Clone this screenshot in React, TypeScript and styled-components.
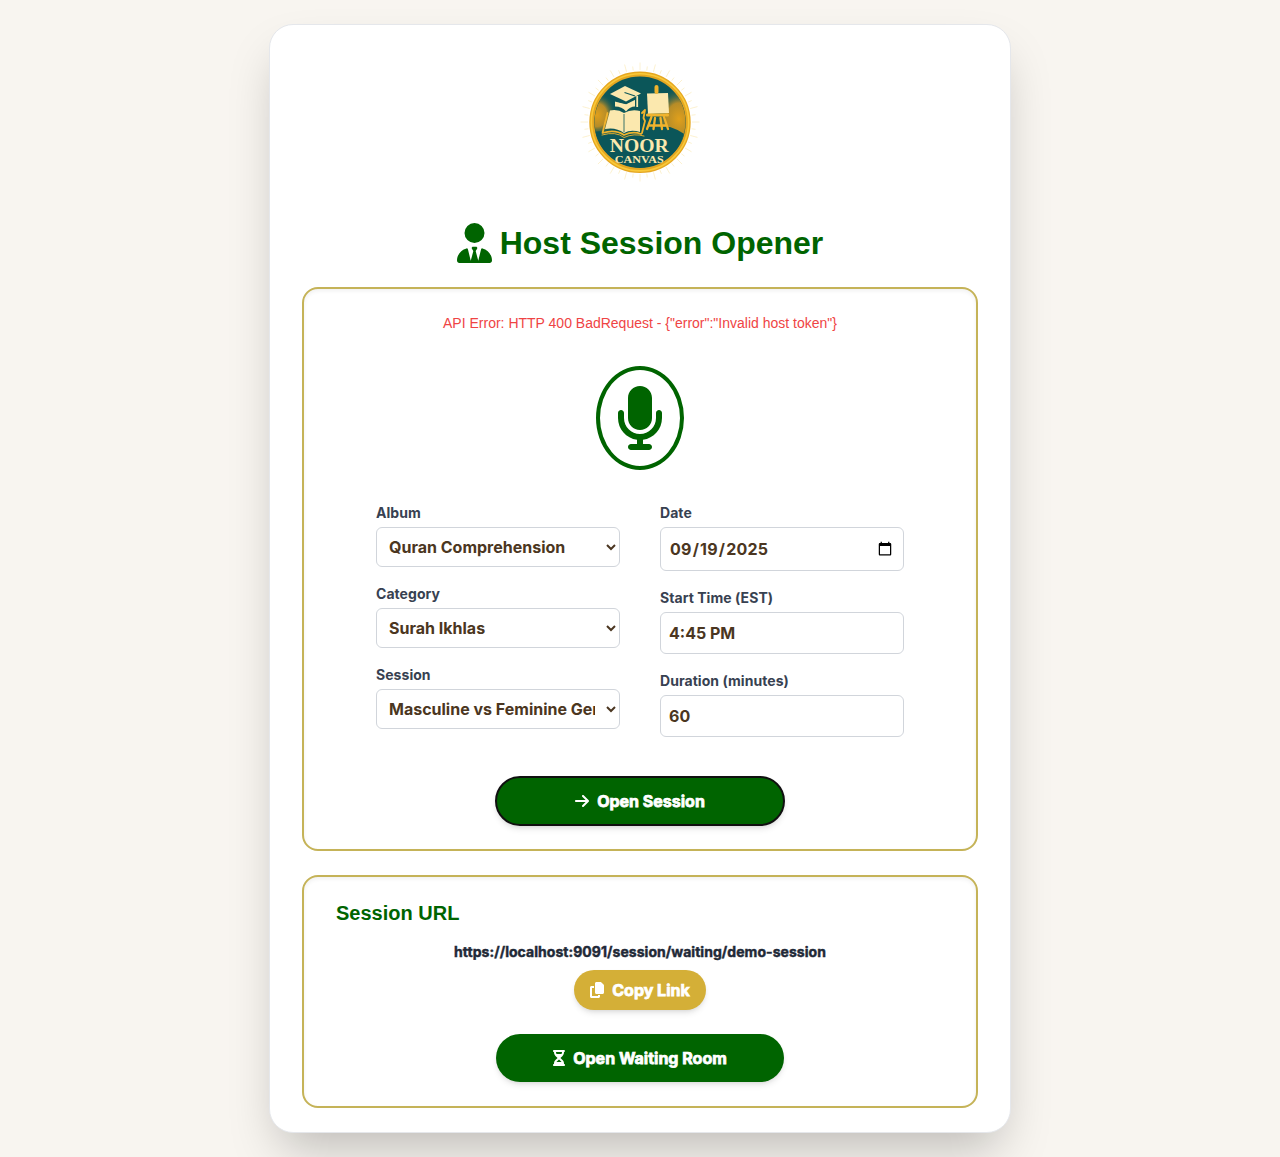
import React from "react";
import styled, { createGlobalStyle, css } from "styled-components";
import { FaUserTie, FaMicrophone, FaArrowRight, FaCopy, FaHourglassHalf } from "react-icons/fa6";

const GlobalStyle = createGlobalStyle`
  *, *::before, *::after { box-sizing: border-box; }
  body {
    margin: 0;
    background: #f8f5f0;
    color: #1f2937;
    font-family: Inter, "Liberation Sans", sans-serif;
    font-size: 16px;
    line-height: 24px;
  }
`;

const Page = styled.main`
  min-height: 1157px;
  padding: 24px;
  display: flex;
  justify-content: center;
  align-items: flex-start;
`;

const Shell = styled.div`
  width: 742px;
  height: 1109px;
  padding: 32px 32px 24px;
  background: #fff;
  border: 1px solid #e5e7eb;
  border-radius: 24px;
  box-shadow: 0 25px 50px -12px rgba(0, 0, 0, 0.25);
  display: flex;
  flex-direction: column;
`;

const LogoRow = styled.div`
  height: 130px;
  display: flex;
  justify-content: center;
  align-items: center;
`;

const Title = styled.h1`
  margin: 36px 0 24px;
  height: 40px;
  display: flex;
  justify-content: center;
  align-items: center;
  gap: 8px;
  color: #006400;
  font: 700 32px/40px "Liberation Sans", Arial, sans-serif;
`;

const Panel = styled.section<{ $height: number }>`
  height: ${(p) => p.$height}px;
  border: 2px solid #c5b358;
  border-radius: 16px;
  box-shadow: inset 0 2px 4px rgba(0, 0, 0, 0.06);
  padding: 24px 32px;
  display: flex;
  flex-direction: column;
  align-items: center;
  & + & { margin-top: 24px; }
  & > * { flex-shrink: 0; }
`;

const ErrorText = styled.p`
  margin: 0;
  color: #ef4444;
  font: 400 14px/20px "Liberation Sans", Arial, sans-serif;
`;

const MicBadge = styled.div`
  margin: 33px 0 32px;
  padding: 16px;
  display: flex;
  color: #006400;
  border: 4px solid #006400;
  border-radius: 50%;
`;

const Form = styled.div`
  width: 528px;
  display: grid;
  grid-template-columns: 1fr 1fr;
  gap: 40px;
`;

const Column = styled.div`
  display: flex;
  flex-direction: column;
  gap: 16px;
`;

const Field = styled.label`
  display: flex;
  flex-direction: column;
  gap: 4px;
  color: #374151;
  font-size: 14px;
  font-weight: 700;
  line-height: 21px;
  letter-spacing: 0.05px;
`;

const control = css`
  width: 100%;
  margin: 0;
  padding: 8px;
  color: #4b3621;
  background: #fff;
  border: 1px solid #d1d5db;
  border-radius: 6px;
  font: 700 16px/24px Inter, sans-serif;
  letter-spacing: normal;
  outline: none;
`;

const Select = styled.select`
  ${control}
  height: 40px;
`;

const Input = styled.input`
  ${control}
  height: 42px;
`;

const DateInput = styled(Input)`
  height: 44px;
  letter-spacing: 0.22px;
`;

const Pill = styled.button<{ $width: number; $height: number; $tone: string; $outlined?: boolean }>`
  width: ${(p) => p.$width}px;
  height: ${(p) => p.$height}px;
  padding: 0;
  display: flex;
  justify-content: center;
  align-items: center;
  gap: 8px;
  color: #fff;
  background: ${(p) => p.$tone};
  border: ${(p) => (p.$outlined ? "2px solid #101010" : "0")};
  border-radius: 999px;
  box-shadow: 0 4px 6px -1px rgba(0, 0, 0, 0.1), 0 2px 4px -2px rgba(0, 0, 0, 0.1);
  font: 700 16px/24px Inter, sans-serif;
  -webkit-text-stroke: 0.75px currentColor;
`;

const OpenSession = styled(Pill)`
  margin-top: 39px;
`;

const WaitingRoom = styled(Pill)`
  margin-top: 24px;
`;

const Heading = styled.h2`
  align-self: flex-start;
  margin: -2px 0 0;
  color: #006400;
  font: 700 20px/28px "Liberation Sans", Arial, sans-serif;
`;

const Url = styled.p`
  margin: 15px 0 8px;
  font-size: 14px;
  font-weight: 700;
  line-height: 20px;
  letter-spacing: 0.045px;
  -webkit-text-stroke: 0.45px currentColor;
`;

function Logo() {
  const rays = Array.from({ length: 48 }, (_, i) => i * 7.5);
  return (
    <svg width="120" height="120" viewBox="0 0 120 120" role="img" aria-label="Noor Canvas">
      <defs>
        <radialGradient id="glow" cx="0.5" cy="0.5" r="0.5">
          <stop offset="0" stopColor="#e0a01c" />
          <stop offset="0.5" stopColor="#c99222" stopOpacity="0.9" />
          <stop offset="1" stopColor="#0b5659" stopOpacity="0" />
        </radialGradient>
        <clipPath id="disc"><circle cx="60" cy="60" r="45.5" /></clipPath>
      </defs>
      {rays.map((a, i) => (
        <line key={a} x1="60" y1="8" x2="60" y2={i % 2 ? 4 : 0.5} stroke="#fbefc9" strokeWidth="0.8" transform={`rotate(${a} 60 60)`} />
      ))}
      <circle cx="60" cy="60.3" r="48.2" fill="#0b5659" stroke="#e5a721" strokeWidth="5" />
      <circle cx="60" cy="60.3" r="48.6" fill="none" stroke="#f9c93a" strokeWidth="1.6" />
      <g clipPath="url(#disc)">
        <ellipse cx="17" cy="53" rx="20" ry="23" fill="url(#glow)" />
        <ellipse cx="99" cy="57" rx="25" ry="32" fill="url(#glow)" />
        <path d="M10 72Q20 67 24 71Q36 67 44 74Q54 70 64 73Q76 63 90 65Q100 68 110 76V110H10Z" fill="#0b5659" />
      </g>
      <g fill="#fbe8ae">
        <path d="M30 32 45 24 61 31.5 46 39.5Z" />
        <path d="M35 39V44.5Q42 44.5 46 49.5Q50 44.5 55 44.5V37L46 42Z" />
        <path d="M30 48.5Q38 47 44 51Q51 47 60 49V70Q51 67 44 71Q36 65 25 67Z" />
        <path d="M67 31.5 88 31 89 51 68 52Z" />
      </g>
      <path d="M44.5 30.5 55 34" fill="none" stroke="#0b5659" strokeWidth="1.2" />
      <path d="M34 38.5 46 41.5 55 37" fill="none" stroke="#0b5659" strokeWidth="1.4" />
      <path d="M44 52V70" fill="none" stroke="#0b5659" strokeWidth="0.8" />
      <path d="M57.2 34V45" stroke="#fbe8ae" strokeWidth="1.8" />
      <g fill="none" stroke="#f0b32d" strokeWidth="1.8" strokeLinecap="round" strokeLinejoin="round">
        <path d="M27.5 51 22.5 71Q35 67 44 73Q53 69 61 72M62 51 65 48 63.5 56 65 59 62 71" />
        <path d="M22 73Q36 69 44 75.5Q54 71 64 74" strokeWidth="0.9" />
        <path d="M76.5 25V30" strokeWidth="4" />
        <path d="M67.5 53H87.5" strokeWidth="3.2" />
        <path d="M71.5 55 67 67M84 55 88 67M75 56 73.5 67M80.5 56 82 67M70 63.5H86" strokeWidth="2.3" />
      </g>
      <text x="59.2" y="89.5" fill="#fbe8ae" textAnchor="middle" fontFamily="Liberation Serif, serif" fontSize="18" fontWeight="700" textLength="59" lengthAdjust="spacingAndGlyphs">NOOR</text>
      <text x="59.2" y="100.8" fill="#fbe8ae" textAnchor="middle" fontFamily="Liberation Serif, serif" fontSize="10.5" fontWeight="700" textLength="49" lengthAdjust="spacingAndGlyphs">CANVAS</text>
    </svg>
  );
}

const albumFields = [
  { label: "Album", value: "Quran Comprehension" },
  { label: "Category", value: "Surah Ikhlas" },
  { label: "Session", value: "Masculine vs Feminine Gender" },
];

export default function App() {
  return (
    <>
      <GlobalStyle />
      <Page>
        <Shell>
          <LogoRow><Logo /></LogoRow>
          <Title><FaUserTie size={40} style={{ width: 35 }} />Host Session Opener</Title>
          <Panel $height={564}>
            <ErrorText>{'API Error: HTTP 400 BadRequest - {"error":"Invalid host token"}'}</ErrorText>
            <MicBadge><FaMicrophone size={64} style={{ width: 48 }} /></MicBadge>
            <Form>
              <Column>
                {albumFields.map((f) => (
                  <Field key={f.label}>
                    {f.label}
                    <Select defaultValue={f.value}><option>{f.value}</option></Select>
                  </Field>
                ))}
              </Column>
              <Column>
                <Field>Date<DateInput type="date" defaultValue="2025-09-19" /></Field>
                <Field>Start Time (EST)<Input type="text" defaultValue="4:45 PM" /></Field>
                <Field>Duration (minutes)<Input type="number" defaultValue="60" /></Field>
              </Column>
            </Form>
            <OpenSession $width={290} $height={50} $tone="#006400" $outlined>
              <FaArrowRight size={16} style={{ width: 14 }} />Open Session
            </OpenSession>
          </Panel>
          <Panel $height={233}>
            <Heading>Session URL</Heading>
            <Url>https://localhost:9091/session/waiting/demo-session</Url>
            <Pill $width={132} $height={40} $tone="#d4af37">
              <FaCopy size={16} style={{ width: 14 }} />Copy Link
            </Pill>
            <WaitingRoom $width={288} $height={48} $tone="#006400">
              <FaHourglassHalf size={16} style={{ width: 12 }} />Open Waiting Room
            </WaitingRoom>
          </Panel>
        </Shell>
      </Page>
    </>
  );
}
